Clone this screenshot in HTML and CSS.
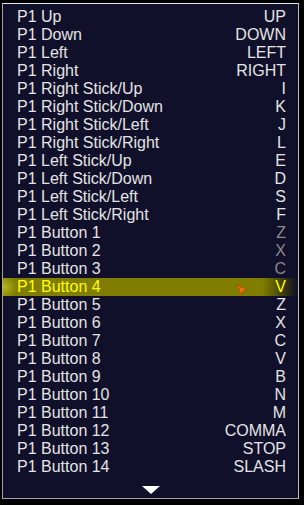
FILE: index.html
```html
<!DOCTYPE html>
<html>
<head>
<meta charset="utf-8">
<link rel="stylesheet" href="styles.css">
</head>
<body>
<div class="panel">
  <div class="list">
    <div class="row"><span>P1 Up</span><span>UP</span></div>
    <div class="row"><span>P1 Down</span><span>DOWN</span></div>
    <div class="row"><span>P1 Left</span><span>LEFT</span></div>
    <div class="row"><span>P1 Right</span><span>RIGHT</span></div>
    <div class="row"><span>P1 Right Stick/Up</span><span>I</span></div>
    <div class="row"><span>P1 Right Stick/Down</span><span>K</span></div>
    <div class="row"><span>P1 Right Stick/Left</span><span>J</span></div>
    <div class="row"><span>P1 Right Stick/Right</span><span>L</span></div>
    <div class="row"><span>P1 Left Stick/Up</span><span>E</span></div>
    <div class="row"><span>P1 Left Stick/Down</span><span>D</span></div>
    <div class="row"><span>P1 Left Stick/Left</span><span>S</span></div>
    <div class="row"><span>P1 Left Stick/Right</span><span>F</span></div>
    <div class="row"><span>P1 Button 1</span><span class="dim">Z</span></div>
    <div class="row"><span>P1 Button 2</span><span class="dim">X</span></div>
    <div class="row"><span>P1 Button 3</span><span class="dim">C</span></div>
    <div class="row selected"><span>P1 Button 4</span><span>V</span>
      <svg class="cursor" width="12" height="12" viewBox="0 0 12 12"><path d="M1 1 L11 5.5 L7 7 L5.5 11 Z" fill="#f07010" stroke="#b04800" stroke-width="0.7"/></svg>
    </div>
    <div class="row"><span>P1 Button 5</span><span>Z</span></div>
    <div class="row"><span>P1 Button 6</span><span>X</span></div>
    <div class="row"><span>P1 Button 7</span><span>C</span></div>
    <div class="row"><span>P1 Button 8</span><span>V</span></div>
    <div class="row"><span>P1 Button 9</span><span>B</span></div>
    <div class="row"><span>P1 Button 10</span><span>N</span></div>
    <div class="row"><span>P1 Button 11</span><span>M</span></div>
    <div class="row"><span>P1 Button 12</span><span>COMMA</span></div>
    <div class="row"><span>P1 Button 13</span><span>STOP</span></div>
    <div class="row"><span>P1 Button 14</span><span>SLASH</span></div>
  </div>
  <div class="more"><span class="arrow"></span></div>
</div>
</body>
</html>
```

FILE: styles.css
```css
html, body {
  margin: 0;
  padding: 0;
  background: #000;
}
body {
  width: 304px;
  height: 505px;
  overflow: hidden;
}
.panel {
  margin: 3px 0 0 2px;
  width: 295px;
  height: 494px;
  background: #10102b;
  border: 1px solid #a4a4a4;
  border-top-color: #e6e6e6;
  border-right-color: #bdbdbd;
  font-family: "Liberation Sans", Arial, sans-serif;
  font-size: 16px;
  color: #e4e4e4;
  display: flex;
  flex-direction: column;
}
.list {
  padding-top: 4px;
  display: flex;
  flex-direction: column;
}
.row {
  position: relative;
  height: 18px;
  line-height: 18px;
  padding: 0 12px 0 14px;
  display: flex;
  justify-content: space-between;
  white-space: nowrap;
}
.dim {
  color: #8a8a8a;
}
.selected {
  color: #ffff00;
  background:
    radial-gradient(ellipse 14px 12px at 0 50%, rgba(230,230,60,0.55), rgba(230,230,60,0)),
    linear-gradient(to right, #807d00 0, #807d00 88%, #5c5a00 92%, #2a2814 97%, #10102b 100%);
}
.cursor {
  position: absolute;
  left: 233px;
  top: 6px;
}
.more {
  flex: 1;
  display: flex;
  justify-content: center;
  padding-top: 10px;
}
.arrow {
  width: 0;
  height: 0;
  border-left: 9px solid transparent;
  border-right: 9px solid transparent;
  border-top: 8px solid #ffffff;
}
```
